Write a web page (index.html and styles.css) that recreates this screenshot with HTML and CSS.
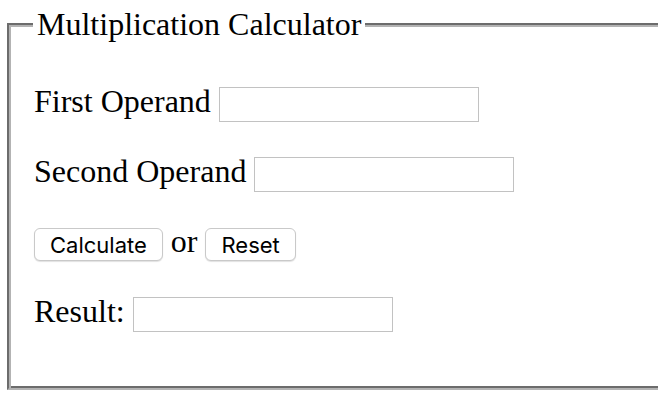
FILE: index.html
```html
<!DOCTYPE html>
<html>
<head>
<meta charset="utf-8">
<title>Multiplication Calculator</title>
<link rel="stylesheet" href="styles.css">
</head>
<body>
<form class="calc">
  <fieldset class="box">
    <legend class="title">Multiplication Calculator</legend>
    <div class="rows">
      <p class="row">First Operand <input class="field" type="text"></p>
      <p class="row">Second Operand <input class="field" type="text"></p>
      <p class="row"><button class="btn" type="button">Calculate</button> or <button class="btn" type="reset">Reset</button></p>
      <p class="row">Result: <input class="field" type="text"></p>
    </div>
  </fieldset>
</form>
</body>
</html>
```

FILE: styles.css
```css
html, body {
  margin: 0;
  padding: 0;
  overflow: hidden;
  background: #ffffff;
}
body {
  width: 658px;
  height: 410px;
  font-family: "Liberation Serif", "Times New Roman", serif;
  font-size: 32px;
  color: #000;
}
.calc {
  margin: 0;
}
.box {
  margin: 6px 0 0 7px;
  width: 760px;
  min-inline-size: 0;
  box-sizing: border-box;
  height: 384px;
  padding: 40px 0 0 25px;
  border-style: solid;
  border-width: 2px;
  border-color: #6c6c6c #b3b3b3 #b3b3b3 #6c6c6c;
  box-shadow: inset 2px 2px 0 #b3b3b3, inset -2px -2px 0 #6c6c6c;
}
.title {
  padding: 0 4px;
  margin-left: -1px;
  line-height: 36px;
  background: #fff;
}
.rows {
  display: flex;
  flex-direction: column;
  gap: 32px;
}
.row {
  margin: 0;
  height: 38px;
  line-height: 38px;
  white-space: nowrap;
}
.field {
  vertical-align: middle;
  box-sizing: border-box;
  width: 260px;
  height: 35px;
  margin: 0;
  padding: 0 4px;
  border: 1px solid #c2c2c2;
  border-radius: 0;
  background: #fff;
  font-family: "Liberation Sans", Arial, sans-serif;
  font-size: 20px;
}
.btn {
  vertical-align: middle;
  box-sizing: border-box;
  height: 33px;
  margin: 0;
  padding: 0 15px;
  border: 1px solid #c9c9c9;
  border-radius: 6px;
  background: #fff;
  box-shadow: 0 1px 1px rgba(0, 0, 0, 0.12);
  font-family: Inter, "Liberation Sans", Arial, sans-serif;
  font-size: 22px;
  color: #000;
  line-height: 1;
}
```
